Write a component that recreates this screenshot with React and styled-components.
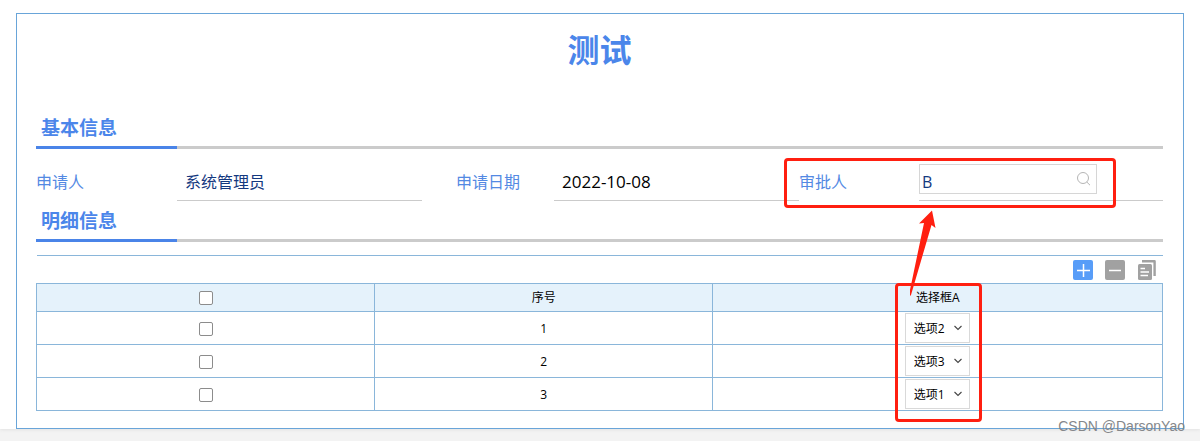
import React from "react";
import styled, { createGlobalStyle } from "styled-components";

const Global = createGlobalStyle`
  *, *::before, *::after { box-sizing: border-box; }
  body {
    margin: 0;
    background: #f3f3f3;
    color: #000;
    font-family: "Open Sans", "Noto Sans CJK SC", sans-serif;
    font-size: 12px;
  }
`;

const Page = styled.div`
  position: relative;
  padding: 13px 16px 0;
  background: #fff;
  box-shadow: 0 1px 3px #e2e2e2;
`;

const Card = styled.form`
  position: relative;
  padding: 0 20px 17px 19px;
  border: 1px solid #69a5d9;
`;

const Title = styled.h1`
  margin: 0;
  padding: 10px 0 36px;
  color: #4b86ea;
  font-family: "Noto Sans CJK SC", sans-serif;
  font-size: 32px;
  line-height: 48px;
  text-align: center;
`;

const SectionHead = styled.div`
  display: grid;
  grid-template-columns: 1fr 7fr;
  &::after {
    content: "";
    border-bottom: 3px solid #cbcbcb;
  }
`;

const SectionTitle = styled.h2`
  margin: 0;
  padding-left: 5px;
  border-bottom: 3px solid #4a84e8;
  color: #4b86ea;
  font-family: "Noto Sans CJK SC", sans-serif;
  font-size: 19px;
  line-height: 38px;
  white-space: nowrap;
`;

const Fields = styled.div`
  display: grid;
  grid-template-columns: 141fr 245fr 132fr 245fr 120fr 244fr;
  height: 52px;
`;

const Label = styled.label`
  padding: 21px 0 0 ${(p) => (p.$indent ? "34px" : "0")};
  color: #5389e3;
  font-size: 16px;
  line-height: 24px;
`;

const Value = styled.div`
  padding: ${(p) => (p.$editable ? "15px 0 0" : "0")};
  border-bottom: 1px solid #cbcbcb;
`;

const PlainInput = styled.input`
  width: 100%;
  height: 24px;
  margin-top: 20px;
  padding: 0 8px;
  border: 0;
  outline: 0;
  background: none;
  color: ${(p) => (p.$date ? "#000" : "#14397f")};
  font-family: inherit;
  font-size: ${(p) => (p.$date ? "17px" : "16px")};
`;

const SearchBox = styled.div`
  display: flex;
  align-items: center;
  width: 73%;
  height: 30px;
  padding-right: 4px;
  border: 1px solid #d6d6d6;
`;

const SearchInput = styled.input`
  flex: 1;
  min-width: 0;
  height: 28px;
  padding: 6px 2px 0;
  border: 0;
  outline: 0;
  background: none;
  color: #14397f;
  font-family: inherit;
  font-size: 16px;
`;

const IconButton = styled.button`
  display: block;
  padding: 0;
  border: 0;
  background: none;
  svg { display: block; }
`;

const Toolbar = styled.div`
  display: flex;
  align-items: flex-start;
  justify-content: flex-end;
  gap: 12px;
  height: 28px;
  margin: 13px 0 0 1px;
  padding: 4px 6px 0 0;
  border-top: 1px solid #8ab6da;
`;

const Table = styled.table`
  width: 100%;
  border-collapse: collapse;
  table-layout: fixed;
`;

const HeadCell = styled.th`
  width: ${(p) => p.$width};
  height: 28px;
  padding: 1px 0 0 1px;
  border: 1px solid #8ab6da;
  background: #e5f2fb;
  font-weight: 400;
  line-height: 18px;
`;

const Cell = styled.td`
  height: 33px;
  padding: ${(p) => (p.$control ? "0" : "2px 0 0 1px")};
  border: 1px solid #8ab6da;
  text-align: center;
  line-height: 18px;
`;

const Check = styled.input`
  appearance: none;
  display: block;
  width: 14px;
  height: 14px;
  margin: 0 auto;
  border: 1px solid #8c8c8c;
  border-radius: 2px;
  background: #fff;
`;

const SelectWrap = styled.div`
  display: flex;
  align-items: center;
  justify-content: flex-end;
  position: relative;
  width: 65px;
  height: 30px;
  margin: 0 auto;
  svg {
    position: absolute;
    right: 8px;
    pointer-events: none;
  }
`;

const Select = styled.select`
  appearance: none;
  width: 100%;
  height: 30px;
  padding: 0 8px;
  border: 1px solid #d9d9d9;
  border-radius: 0;
  background: #fff;
  color: #000;
  font-family: inherit;
  font-size: 12px;
`;

const Highlight = styled.div`
  position: absolute;
  right: ${(p) => p.$right}px;
  top: ${(p) => p.$top}px;
  width: ${(p) => p.$width}px;
  height: ${(p) => p.$height}px;
  border: 3px solid #ff1f10;
  border-radius: 4px;
  pointer-events: none;
`;

const Arrow = styled.svg`
  position: absolute;
  right: 247px;
  top: 210px;
  pointer-events: none;
`;

const Footer = styled.footer`
  position: relative;
  height: 12px;
`;

const Watermark = styled.div`
  position: absolute;
  right: 15px;
  bottom: 6px;
  color: #85878a;
  font-family: "Liberation Sans", sans-serif;
  font-size: 14px;
  line-height: 18px;
`;

const rows = [
  { no: 1, choice: "选项2" },
  { no: 2, choice: "选项3" },
  { no: 3, choice: "选项1" },
];

function SearchIcon() {
  return (
    <svg width="16" height="16" viewBox="0 0 16 16" fill="none" stroke="#b5b5b5">
      <circle cx="7" cy="7" r="5.5" />
      <path d="M10.8 11 L14 14.2" />
    </svg>
  );
}

function SquareIcon({ color, plus }) {
  return (
    <svg width="20" height="20" viewBox="0 0 20 20">
      <rect width="20" height="20" rx="2" fill={color} />
      <path d={plus ? "M4 10.5H17M10.5 4V17" : "M4 10.5H16"} stroke="#fff" strokeWidth="1.5" />
    </svg>
  );
}

function CopyIcon() {
  return (
    <svg width="20" height="20" viewBox="0 0 20 20">
      <path d="M5 1.2H17.6V16" fill="none" stroke="#a1a1a1" strokeWidth="2.4" strokeLinejoin="round" />
      <rect x="1" y="4" width="14" height="16" rx="1.5" fill="#a1a1a1" />
      <path d="M3.5 8.5H8M3.5 12H12M3.5 15.5H11" stroke="#fff" strokeWidth="1.3" />
    </svg>
  );
}

function Chevron() {
  return (
    <svg width="8" height="6" viewBox="0 0 8 6" fill="none" stroke="#444" strokeWidth="1.1">
      <path d="M0.5 1 L4 4.5 L7.5 1" />
    </svg>
  );
}

export default function App() {
  return (
    <>
      <Global />
      <Page>
        <Card>
          <Title>测试</Title>
          <SectionHead>
            <SectionTitle>基本信息</SectionTitle>
          </SectionHead>
          <Fields>
            <Label htmlFor="applicant">申请人</Label>
            <Value>
              <PlainInput id="applicant" defaultValue="系统管理员" />
            </Value>
            <Label htmlFor="date" $indent>申请日期</Label>
            <Value>
              <PlainInput id="date" $date defaultValue="2022-10-08" />
            </Value>
            <Label htmlFor="approver">审批人</Label>
            <Value $editable>
              <SearchBox>
                <SearchInput id="approver" defaultValue="B" />
                <IconButton type="button" aria-label="搜索">
                  <SearchIcon />
                </IconButton>
              </SearchBox>
            </Value>
          </Fields>
          <SectionHead>
            <SectionTitle>明细信息</SectionTitle>
          </SectionHead>
          <Toolbar>
            <IconButton type="button" aria-label="添加">
              <SquareIcon color="#589df8" plus />
            </IconButton>
            <IconButton type="button" aria-label="删除">
              <SquareIcon color="#a1a1a1" />
            </IconButton>
            <IconButton type="button" aria-label="复制">
              <CopyIcon />
            </IconButton>
          </Toolbar>
          <Table>
            <thead>
              <tr>
                <HeadCell $width="30%">
                  <Check type="checkbox" aria-label="全选" />
                </HeadCell>
                <HeadCell $width="30%">序号</HeadCell>
                <HeadCell $width="40%">选择框A</HeadCell>
              </tr>
            </thead>
            <tbody>
              {rows.map((row) => (
                <tr key={row.no}>
                  <Cell>
                    <Check type="checkbox" aria-label={`选择 ${row.no}`} />
                  </Cell>
                  <Cell>{row.no}</Cell>
                  <Cell $control>
                    <SelectWrap>
                      <Select aria-label={`选择框A ${row.no}`} defaultValue={row.choice}>
                        <option>选项1</option>
                        <option>选项2</option>
                        <option>选项3</option>
                      </Select>
                      <Chevron />
                    </SelectWrap>
                  </Cell>
                </tr>
              ))}
            </tbody>
          </Table>
        </Card>
        <Highlight $right={84} $top={158} $width={332} $height={50} />
        <Highlight $right={218} $top={283} $width={87} $height={139} />
        <Arrow width="45" height="88" viewBox="908 210 45 88">
          <path d="M932 210.5 L919 223.5 L924 223 L910 290 L910 296 L911 295 L931.5 225 L935.5 228 Z" fill="#ff1f10" />
        </Arrow>
      </Page>
      <Footer>
        <Watermark>CSDN @DarsonYao</Watermark>
      </Footer>
    </>
  );
}
